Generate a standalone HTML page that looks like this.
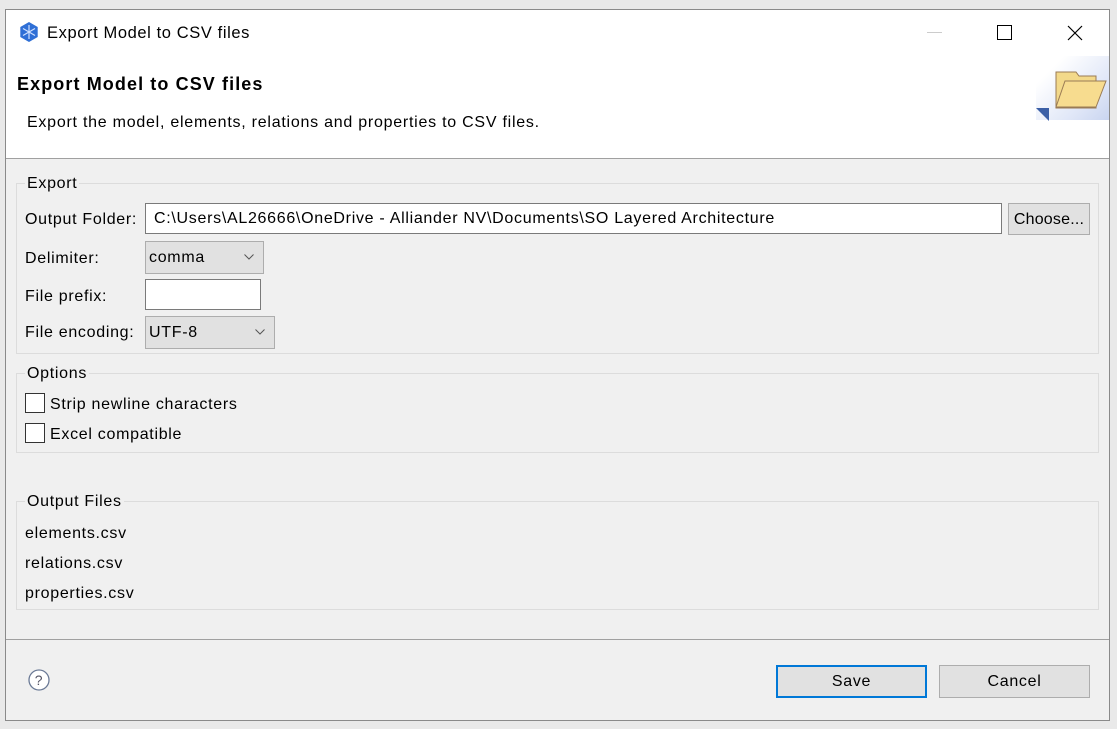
<!DOCTYPE html>
<html><head><meta charset="utf-8"><style>
*{margin:0;padding:0;box-sizing:border-box}
body{width:1117px;height:729px;background:#e9e9e9;font-family:"Liberation Sans",sans-serif;font-size:16px;letter-spacing:0.7px;color:#000;position:relative;overflow:hidden}
.a{position:absolute;white-space:nowrap}
.win{position:absolute;left:5px;top:9px;width:1105px;height:712px;border:1px solid #8a8a8a;background:#f0f0f0;overflow:hidden}
.grp{position:absolute;border:1px solid #dcdcdc}
.lg{position:absolute;top:-9px;left:8px;background:#f0f0f0;padding:0 2px;line-height:18px}
.field{position:absolute;background:#fff;border:1px solid #7a7a7a;line-height:29px;padding-left:7px}
.combo{position:absolute;background:#e1e1e1;border:1px solid #adadad;line-height:31px;padding-left:3px}
.combo svg{position:absolute;right:9px;top:12px}
.btn{position:absolute;background:#e1e1e1;border:1px solid #adadad;text-align:center}
.cb{position:absolute;width:20px;height:20px;background:#fff;border:1px solid #333}
</style></head><body>
<div class="win">
 <div class="a" style="left:0;top:0;width:1105px;height:148px;background:#fff"></div>
 <svg class="a" style="left:13px;top:12px" width="20" height="20" viewBox="0 0 20 20"><polygon points="10,0 18.7,5 18.7,15 10,20 1.3,15 1.3,5" fill="#2f6fd6"/><g stroke="#cfe0ff" stroke-width="1.2"><line x1="10" y1="3" x2="10" y2="17"/><line x1="4" y1="6.5" x2="16" y2="13.5"/><line x1="16" y1="6.5" x2="4" y2="13.5"/></g></svg>
 <div class="a" style="left:41px;top:14px;font-size:16.5px;letter-spacing:0.6px">Export Model to CSV files</div>
 <div class="a" style="left:921px;top:22px;width:15px;height:1px;background:#ccc"></div>
 <div class="a" style="left:991px;top:15px;width:15px;height:15px;border:1.3px solid #000"></div>
 <svg class="a" style="left:1061px;top:15px" width="16" height="16"><path d="M1 1L15 15M15 1L1 15" stroke="#000" stroke-width="1.2"/></svg>
 <div class="a" style="left:11px;top:64px;font-weight:bold;font-size:18px;letter-spacing:1.1px">Export Model to CSV files</div>
 <div class="a" style="left:21px;top:104px;font-size:16px;letter-spacing:0.75px">Export the model, elements, relations and properties to CSV files.</div>
 <div class="a" style="left:1030px;top:46px;width:75px;height:64px;background:linear-gradient(135deg,#fff 20%,#dfe6f7 70%,#c8d4f0)"></div>
 <svg class="a" style="left:1028px;top:50px" width="78" height="65" viewBox="0 0 78 65"><path d="M22 12h20l3 4h17v32H22z" fill="#f3d98a" stroke="#9a7b55"/><path d="M22 47l9-26h41l-10 26z" fill="#f7dc8f" stroke="#9a7b55"/><polygon points="2,48 15,48 15,61" fill="#3b5fa6"/></svg>
 <div class="a" style="left:0;top:148px;width:1105px;height:1px;background:#a0a0a0"></div>

 <div class="grp" style="left:10px;top:173px;width:1083px;height:171px"><div class="lg">Export</div></div>
 <div class="a" style="left:19px;top:201px">Output Folder:</div>
 <div class="field" style="left:139px;top:193px;width:857px;height:31px;padding-left:8px">C:\Users\AL26666\OneDrive - Alliander NV\Documents\SO Layered Architecture</div>
 <div class="btn" style="left:1002px;top:193px;width:82px;height:32px;line-height:31px;letter-spacing:0.2px">Choose...</div>
 <div class="a" style="left:19px;top:240px">Delimiter:</div>
 <div class="combo" style="left:139px;top:231px;width:119px;height:33px">comma<svg width="10" height="6"><path d="M0.5 0.5L5 5L9.5 0.5" stroke="#555" fill="none"/></svg></div>
 <div class="a" style="left:19px;top:278px">File prefix:</div>
 <div class="field" style="left:139px;top:269px;width:116px;height:31px"></div>
 <div class="a" style="left:19px;top:314px">File encoding:</div>
 <div class="combo" style="left:139px;top:306px;width:130px;height:33px">UTF-8<svg width="10" height="6"><path d="M0.5 0.5L5 5L9.5 0.5" stroke="#555" fill="none"/></svg></div>

 <div class="grp" style="left:10px;top:363px;width:1083px;height:80px"><div class="lg">Options</div></div>
 <div class="cb" style="left:19px;top:383px"></div>
 <div class="a" style="left:44px;top:386px">Strip newline characters</div>
 <div class="cb" style="left:19px;top:413px"></div>
 <div class="a" style="left:44px;top:416px">Excel compatible</div>

 <div class="grp" style="left:10px;top:491px;width:1083px;height:109px"><div class="lg">Output Files</div></div>
 <div class="a" style="left:19px;top:515px">elements.csv</div>
 <div class="a" style="left:19px;top:545px">relations.csv</div>
 <div class="a" style="left:19px;top:575px">properties.csv</div>

 <div class="a" style="left:0;top:629px;width:1105px;height:1px;background:#a0a0a0"></div>
 <svg class="a" style="left:22px;top:659px" width="22" height="22" viewBox="0 0 22 22"><circle cx="11" cy="11" r="10" fill="#fff" stroke="#6b7a96" stroke-width="1.3"/><text x="11" y="16" text-anchor="middle" font-family="Liberation Sans" font-size="14" fill="#556">?</text></svg>
 <div class="btn" style="left:770px;top:655px;width:151px;height:33px;line-height:30px;border:2px solid #0078d7">Save</div>
 <div class="btn" style="left:933px;top:655px;width:151px;height:33px;line-height:32px">Cancel</div>
</div>
</body></html>
